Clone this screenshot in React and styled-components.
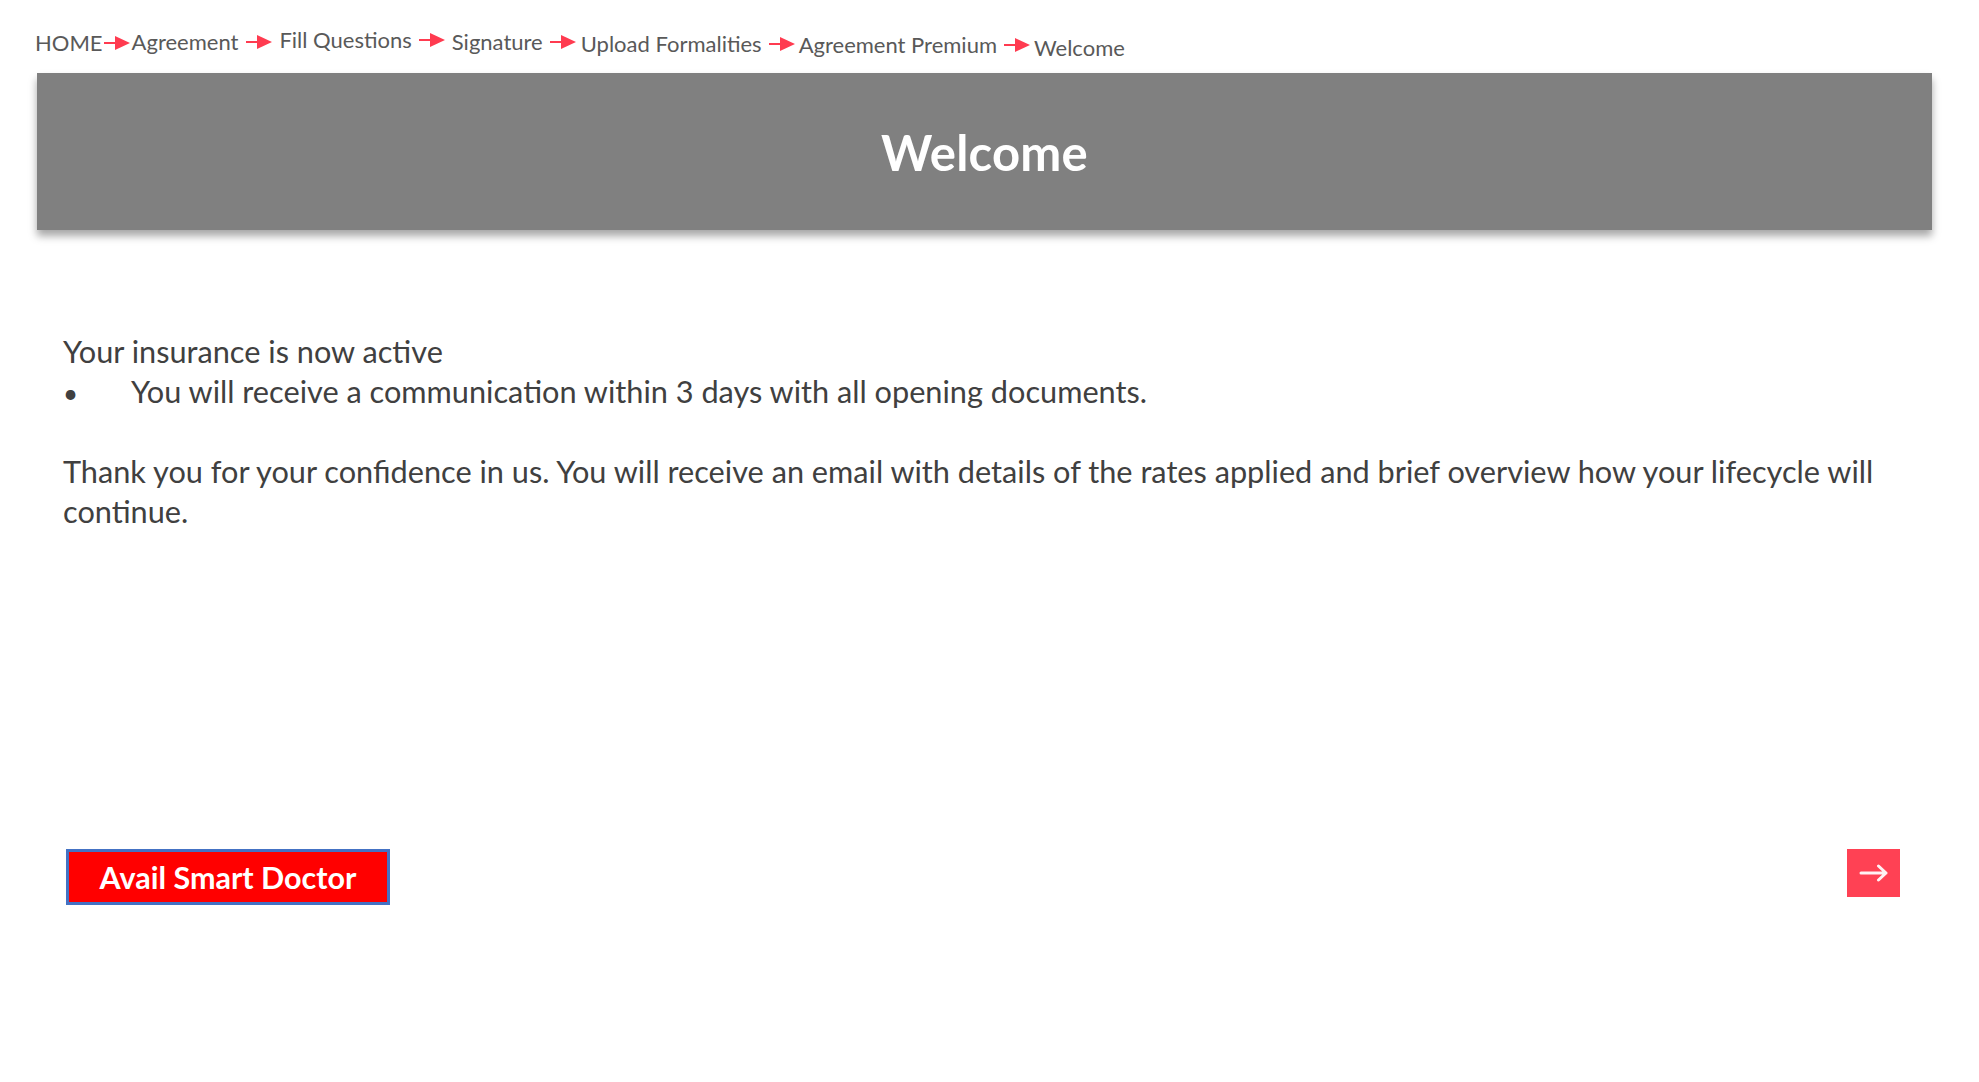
import React from 'react';
import styled, { createGlobalStyle } from 'styled-components';

const GlobalStyle = createGlobalStyle`
  html, body {
    margin: 0;
    padding: 0;
    background: #ffffff;
  }
  body {
    font-family: Lato, "Open Sans", "Liberation Sans", sans-serif;
    color: #404040;
  }
`;

const Page = styled.div`
  display: flex;
  flex-direction: column;
  min-height: 1082px;
`;

const Crumbs = styled.nav`
  display: flex;
  align-items: flex-start;
  padding: 29px 0 0 35px;
  height: 73px;
  box-sizing: border-box;
`;

const Crumb = styled.span`
  display: flex;
  align-items: center;
  margin-top: ${props => props.$drop || 0}px;
  font-size: 22px;
  line-height: 26px;
  color: #595959;
  white-space: nowrap;
`;

const CrumbArrow = styled.svg`
  width: 26px;
  height: 16px;
  margin: 0 ${props => props.$trail}px 0 ${props => props.$lead}px;
  flex: none;
`;

const Banner = styled.header`
  margin: 0 47px 0 37px;
  height: 157px;
  background: #808080;
  box-shadow: 0 6px 8px rgba(0, 0, 0, 0.35);
  display: flex;
  align-items: center;
  justify-content: center;
`;

const BannerTitle = styled.h1`
  margin: 0;
  font-size: 49px;
  font-weight: 700;
  color: #ffffff;
  letter-spacing: 0.2px;
`;

const Content = styled.section`
  padding: 102px 70px 0 63px;
  font-size: 30.7px;
  line-height: 40px;
  color: #404040;
`;

const Line = styled.p`
  margin: 0;
`;

const Bullet = styled.div`
  display: flex;
  align-items: baseline;
  height: 40px;
`;

const Dot = styled.span`
  width: 68px;
  flex: none;
  font-size: 26px;
`;

const Para = styled.p`
  margin: 40px 0 0;
`;

const Actions = styled.div`
  display: flex;
  justify-content: space-between;
  align-items: flex-start;
  padding: 317px 79px 0 66px;
`;

const DoctorButton = styled.button`
  width: 324px;
  height: 56px;
  box-sizing: border-box;
  border: 3px solid #4472c4;
  background: #ff0000;
  color: #ffffff;
  font-family: Lato, "Open Sans", sans-serif;
  font-size: 30.5px;
  font-weight: 700;
  padding: 0;
  cursor: pointer;
`;

const NextButton = styled.button`
  width: 53px;
  height: 48px;
  border: none;
  padding: 0;
  background: #ff4154;
  display: flex;
  align-items: center;
  justify-content: center;
  cursor: pointer;
`;

const steps = [
  { label: 'HOME', drop: 1, lead: 1, trail: 2 },
  { label: 'Agreement', drop: 0, lead: 8, trail: 7 },
  { label: 'Fill Questions', drop: -2, lead: 7, trail: 7 },
  { label: 'Signature', drop: 0, lead: 7, trail: 5 },
  { label: 'Upload Formalities', drop: 2, lead: 7, trail: 4 },
  { label: 'Agreement Premium', drop: 3, lead: 7, trail: 4 },
  { label: 'Welcome', drop: 6 },
];

function Arrow({ lead, trail }) {
  return (
    <CrumbArrow $lead={lead} $trail={trail} viewBox="0 0 26 16">
      <line x1="0" y1="8" x2="13" y2="8" stroke="#ff3b50" strokeWidth="2" />
      <polygon points="11,1 26,8 11,15" fill="#ff3b50" />
    </CrumbArrow>
  );
}

function NextIcon() {
  return (
    <svg width="30" height="18" viewBox="0 0 30 18" fill="none">
      <path
        d="M2 9 H27 M19.5 2 L27 9 L19.5 16"
        stroke="#fff2f4"
        strokeWidth="3"
        strokeLinecap="round"
        strokeLinejoin="round"
      />
    </svg>
  );
}

export default function App() {
  return (
    <Page>
      <GlobalStyle />
      <Crumbs>
        {steps.map((s, i) => (
          <Crumb key={s.label} $drop={s.drop}>
            {s.label}
            {i < steps.length - 1 && <Arrow lead={s.lead} trail={s.trail} />}
          </Crumb>
        ))}
      </Crumbs>
      <Banner>
        <BannerTitle>Welcome</BannerTitle>
      </Banner>
      <Content>
        <Line>Your insurance is now active</Line>
        <Bullet>
          <Dot>•</Dot>
          <span>You will receive a communication within 3 days with all opening documents.</span>
        </Bullet>
        <Para>
          Thank you for your confidence in us. You will receive an email with details of the rates applied and brief overview how your lifecycle will continue.
        </Para>
      </Content>
      <Actions>
        <DoctorButton>Avail Smart Doctor</DoctorButton>
        <NextButton aria-label="Next">
          <NextIcon />
        </NextButton>
      </Actions>
    </Page>
  );
}
